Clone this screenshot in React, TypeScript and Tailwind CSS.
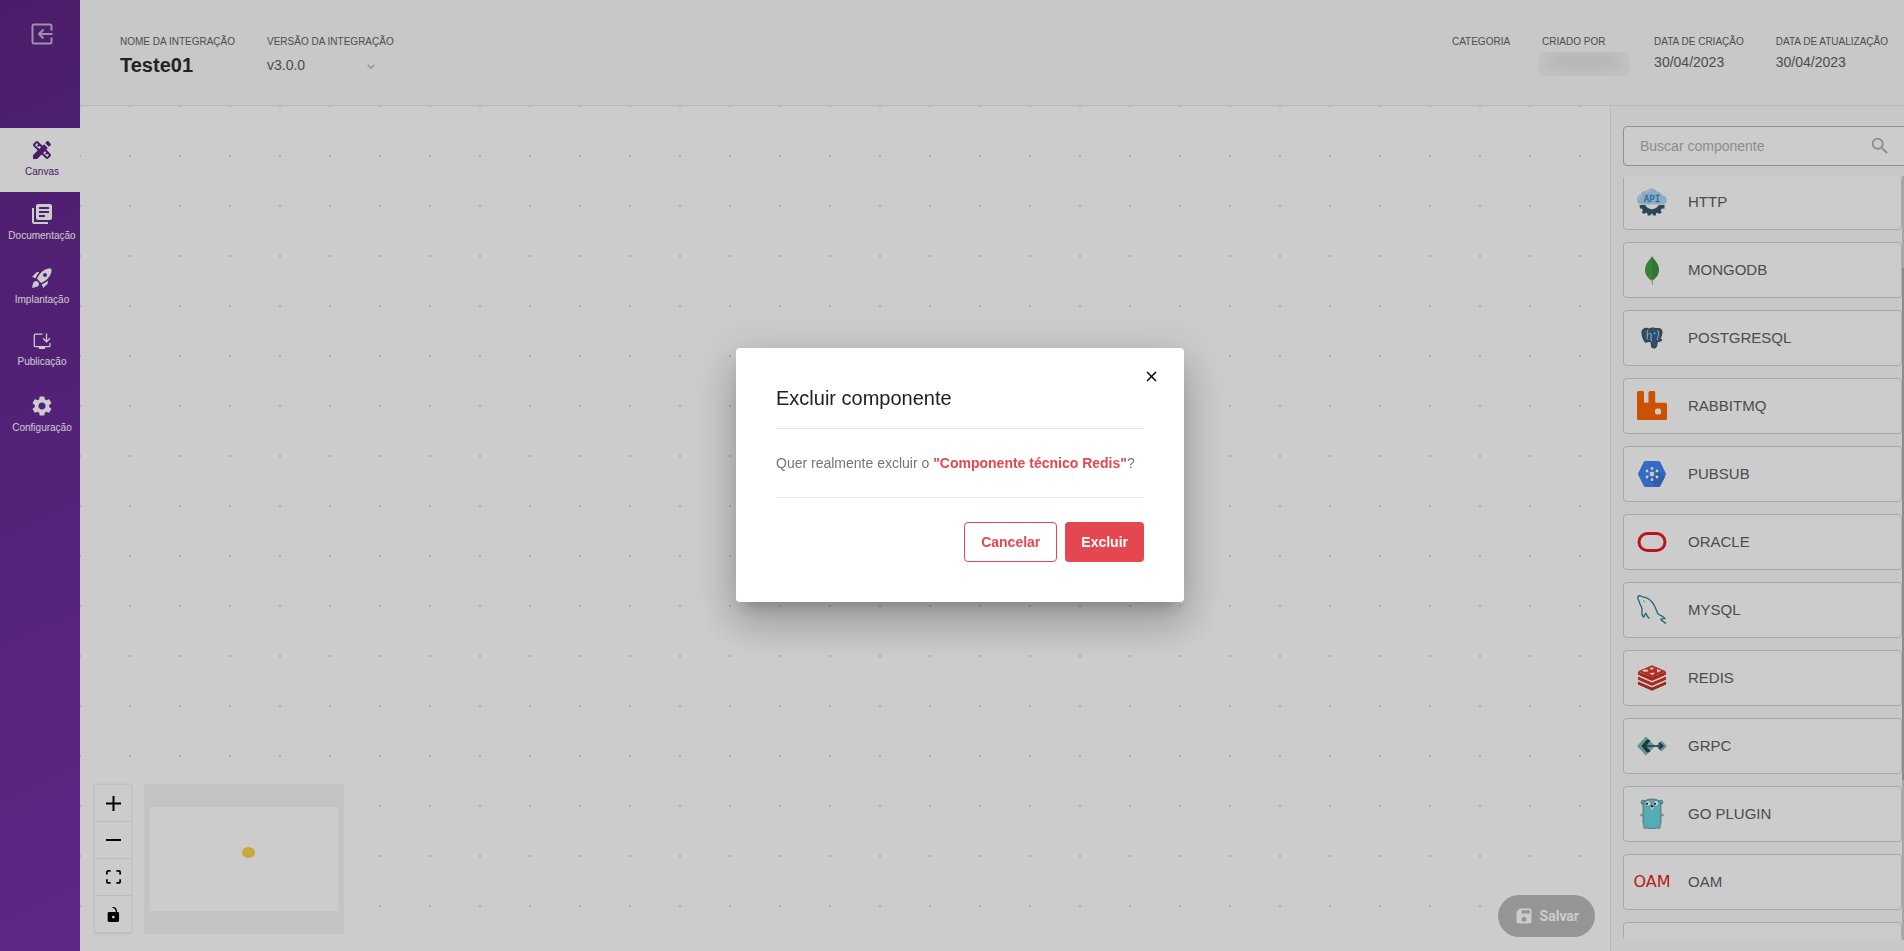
import React, { useState } from 'react';
import { MdClose, MdLibraryBooks, MdSave, MdSearch, MdSettings } from 'react-icons/md';

const ExitIcon = () => (
  <svg viewBox="0 0 24 24" className="w-6 h-6" fill="none" stroke="currentColor" strokeWidth="2">
    <path d="M21.500 8.500V4a1.500 1.500 0 0 0-1.500-1.500H4A1.500 1.500 0 0 0 2.500 4v16A1.500 1.500 0 0 0 4 21.500h16a1.500 1.500 0 0 0 1.500-1.500v-4.500" />
    <path d="M22.500 12H9M13.500 7.500 9 12l4.500 4.500" />
  </svg>
);

const DesignIcon = () => (
  <svg viewBox="0 0 24 24" className="w-6 h-6" fill="currentColor">
    <path d="M16.240 11.510l1.570-1.570-3.750-3.750-1.570 1.570-4.140-4.130c-.78-.78-2.050-.78-2.830 0l-1.900 1.900c-.78.78-.78 2.050 0 2.830l4.130 4.130L3 17.250V21h3.750l4.760-4.760 4.130 4.130c.95.95 2.230.6 2.830 0l1.900-1.900c.78-.78.78-2.050 0-2.830l-4.130-4.130zm-7.060-.44L5.040 6.940l1.890-1.900L8.200 6.310 7.020 7.500l1.410 1.410 1.190-1.190 1.450 1.450-1.890 1.900zm7.880 7.890l-4.130-4.130 1.900-1.900 1.450 1.450-1.190 1.190 1.410 1.410 1.190-1.190 1.270 1.270-1.900 1.900zM20.710 7.040c.39-.39.39-1.020 0-1.410l-2.340-2.340c-.47-.47-1.120-.29-1.410 0l-1.830 1.830 3.750 3.750 1.830-1.830z" />
    <path d="m3.500 17.500 9-9 3.500 3.500-9 9H3.500z" />
  </svg>
);

const RocketIcon = () => (
  <svg viewBox="0 0 24 24" className="w-6 h-6" fill="currentColor">
    <path d="M9.190 6.350c-2.040 2.290-3.440 5.580-3.570 5.890L2 10.690l4.050-4.050c.47-.47 1.150-.68 1.810-.55l1.330.26zM17.650 14.810c-2.290 2.040-5.580 3.440-5.890 3.570L13.310 22l4.050-4.050c.47-.47.68-1.150.55-1.810l-.26-1.330zM9 18c0 .83-.34 1.580-.88 2.120C6.940 21.300 2 22 2 22s.7-4.940 1.880-6.120A2.996 2.996 0 0 1 9 18z" />
    <path
      fillRule="evenodd"
      d="M11.170 17s3.740-1.550 5.890-3.700c5.400-5.400 4.500-9.620 4.210-10.570-.95-.3-5.170-1.190-10.570 4.210C8.550 9.090 7 12.830 7 12.830L11.170 17zM13 9a2 2 0 1 0 4 0 2 2 0 1 0-4 0z"
    />
  </svg>
);

const PublishIcon = () => (
  <svg viewBox="0 0 22 22" className="w-[22px] h-[22px]" fill="none" stroke="currentColor" strokeWidth="1.300">
    <path d="M11.500 4.200H4.500a1.200 1.200 0 0 0-1.200 1.200v10a1.200 1.200 0 0 0 1.200 1.200h13.300a1.200 1.200 0 0 0 1.200-1.200V13" />
    <path d="M15.500 3.500v8M12 8.300l3.500 3.500L19 8.300" />
    <path d="M8 18h6" strokeWidth="2" />
  </svg>
);

const HttpIcon = () => (
  <svg viewBox="0 0 32 30" className="w-8 h-[30px]">
    <path
      d="M5.500 17.500a5.300 5.300 0 0 1-.8-10.300A5.500 5.500 0 0 1 10 4 7 7 0 0 1 21.500 4.800 5.500 5.500 0 0 1 26.500 8.500a4.600 4.600 0 0 1 1 9z"
      fill="#b0d6f5"
    />
    <path d="M2.500 12.500a4 4 0 0 1 3.500-4M10.500 5.500A6 6 0 0 1 15 3" fill="none" stroke="#dcecf9" strokeWidth="1.200" />
    <path
      d="M3.500 18h5.800a7.500 7.500 0 0 0 13.400 0h5.800v3.500l-3 .3-.9 1.600 1.200 1.900-2.300 1.700-1.900-1.300-1.400.5-.4 2.300h-2.800l-.5-1.700h-1.500l-.5 1.700h-2.800l-.4-2.300-1.400-.5-1.900 1.300-2.300-1.700 1.200-1.900-.9-1.600-2-.3z"
      fill="#3c5767"
    />
    <text x="16" y="14.500" textAnchor="middle" fontSize="9" fill="#2f86c1" stroke="#2f86c1" strokeWidth=".3" fontFamily="'DejaVu Sans Mono', monospace">
      API
    </text>
  </svg>
);

const MongoIcon = () => (
  <svg viewBox="0 0 16 30" className="w-4 h-[30px]">
    <path d="M8 1C6 5 1 8 1 15c0 5 3.500 8.500 6.300 10.500h.7z" fill="#4aa047" />
    <path d="M8 1c2 4 7 7 7 14 0 5-3.500 8.500-6.300 10.500H8z" fill="#3f9143" />
    <path d="M7.400 24h1.200l.4 5.500H8z" fill="#b8a48c" />
  </svg>
);

const PostgresIcon = () => (
  <svg viewBox="0 0 22 22" className="w-[22px] h-[22px]" strokeLinejoin="round">
    <g fill="#336791" stroke="#4a4f55" strokeWidth="1.200">
      <path d="M14.500 2C17.500.8 21 2 21 5c0 2.500-1.200 5.500-2.500 7.500.8.2 1.700.2 2.200.3-.8 1.500-2.700 1.900-4.200 1.500z" />
      <path d="M7 1.500C4 .8 1 2 1 5.500c0 3 1.700 8 3.500 9.500 1 .6 2-.4 3-1.500z" />
      <path d="M11.500 1.200c4-.4 6.500 3 6 6.300-.2 2-1.200 3.500-1.200 5.500 0 1.500-.2 3.500-.6 5.500-.4 1.500-1.200 2.300-2.500 2.500-1.500.1-2.500-.7-2.700-2-.2-1.500 0-3.500-.3-4.500-1.500.3-3.400-.2-3.700-1.700C6.300 10.500 7 9 6.500 6.500c-.2-3 1.500-5 5-5.300z" />
    </g>
    <g fill="none" stroke="#fff" strokeWidth=".8">
      <path d="M7 3C5.800 4.500 6.300 6.500 6.400 8c.1 1.700-.5 3 .3 4.500M16.500 3.300c1.200 1.500 1.400 4 .6 6-.5 1.500-1 2.500-.7 4" />
      <path d="M7.500 7c1-.7 2.200-.6 2.700.3.4 1.500-.4 2.700-.3 4 .1 1.200.7 1.700.5 3M12.500 6.500c.8-.6 1.800-.5 2.300-.1" />
    </g>
  </svg>
);

const RabbitIcon = () => (
  <svg viewBox="0 0 30 30" className="w-[30px] h-[30px]">
    <path
      fillRule="evenodd"
      d="M1.500 0h4A1.500 1.500 0 0 1 7 1.500v9.300a1 1 0 0 0 1 1h2.500a1 1 0 0 0 1-1V1.500A1.500 1.500 0 0 1 13 0h3.700a1.500 1.500 0 0 1 1.500 1.500v9.300a1 1 0 0 0 1 1h9.300a1.500 1.500 0 0 1 1.500 1.500v14.200a1.500 1.500 0 0 1-1.500 1.500h-27A1.500 1.500 0 0 1 0 27.500v-26A1.500 1.500 0 0 1 1.500 0zM20 17.500a2 2 0 0 0-2 2v2a2 2 0 0 0 2 2h2a2 2 0 0 0 2-2v-2a2 2 0 0 0-2-2z"
      fill="#ff6600"
    />
  </svg>
);

const PubSubIcon = () => (
  <svg viewBox="0 0 30 28" className="w-[30px] h-7">
    <path d="M8.500 1h13a2 2 0 0 1 1.700 1l5.500 11a2 2 0 0 1 0 2l-5.500 11a2 2 0 0 1-1.700 1h-13a2 2 0 0 1-1.700-1L1.300 15a2 2 0 0 1 0-2L6.800 2a2 2 0 0 1 1.700-1z" fill="#4285f4" />
    <path d="m20 10 8 7-4.800 9a2 2 0 0 1-1.700 1H19l-8-9z" fill="#3b76d9" />
    <g fill="#fff">
      <circle cx="15" cy="14" r="2.200" />
      <circle cx="15" cy="8.300" r="1.400" />
      <circle cx="15" cy="19.700" r="1.400" />
      <circle cx="10" cy="11" r="1.400" />
      <circle cx="20" cy="11" r="1.400" />
      <circle cx="10" cy="17" r="1.400" />
      <circle cx="20" cy="17" r="1.400" />
    </g>
    <path d="M15 8.300v11.400M10 11l10 6M20 11l-10 6" stroke="#fff" strokeWidth=".5" opacity=".6" />
  </svg>
);

const OracleIcon = () => (
  <svg viewBox="0 0 30 20" className="w-[30px] h-5">
    <rect x="2" y="1.500" width="26" height="17" rx="8.500" fill="none" stroke="#ea1b22" strokeWidth="3" />
  </svg>
);

const MysqlIcon = () => (
  <svg viewBox="0 0 30 30" className="w-[30px] h-[30px]" fill="none" stroke="#2e8299" strokeWidth="1.300" strokeLinejoin="round">
    <path d="M12.500 23.500c-1.800-1.500-3-3.400-3.600-5.300-1 1-1.700 2.200-2 4-1.800-1-2.300-4.500-1.800-8.200C4.500 11.500 3 9.500 2.300 7 1.700 5 .2 3 .8 1.700 1.800.3 4 .6 5.500 1.800c5.500.2 9.500 4.200 12 9 1.500 2.800 2 5.600 3.500 8.200 1.800 1.300 4.500 1.800 7 4.500-1.500.2-3.200.2-4.200.8 1 1.700 3.200 2.500 5.200 4.200" />
    <path d="M6.500 5.500c.5.500 1 1 1.200 1.800" strokeWidth="1" />
  </svg>
);

const RedisIcon = () => (
  <svg viewBox="0 0 30 26" className="w-[30px] h-[26px]">
    <path d="m1 16.500 14 6 14-6v3L15 25.700 1 19.500z" fill="#c42e22" />
    <path d="m1 11.500 14 6 14-6v3.200l-14 6.200-14-6.200z" fill="#d83427" />
    <path d="m1 6.500 14 6 14-6v3.200l-14 6.200L1 9.700z" fill="#d03024" />
    <path d="m1 6.300 14-6 14 6-14 6.400z" fill="#dd3a2b" />
    <path d="m1 10.500 14 6.100 14-6.100M1 15.500l14 6.100 14-6.100" fill="none" stroke="#fff" strokeWidth="1" />
    <g fill="#fff">
      <path d="m13.500 2.300 1.500.4 1.700-.5-.5 1.200 1.500.6-2.300.2-.8 1-.8-1-2-.2 1.700-.6z" />
      <ellipse cx="8.500" cy="5.700" rx="3" ry="1.100" />
      <path d="m20 4 4.500 1.800L20 7.500zM12 8.300l6-.8-2.200 2.700z" />
    </g>
  </svg>
);

const GrpcIcon = () => (
  <svg viewBox="0 0 32 20" className="w-8 h-5">
    <path d="m1 10 9-9.500L19 10l-9 9.500zM20 10l5.500-5.500L31 10l-5.500 5.500z" fill="#7dbab5" />
    <path d="M8 10h19" stroke="#2b5160" strokeWidth="1.600" />
    <path d="m14 4.500-3-.5-5 6 5 6 3-.5L9.500 10z" fill="#244653" stroke="#244653" />
    <path d="m23 7 3.500 3L23 13" fill="none" stroke="#244653" strokeWidth="2" />
  </svg>
);

const GopherIcon = () => (
  <svg viewBox="0 0 24 32" className="w-6 h-8">
    <g fill="#f3d7b5" stroke="#8a7a66" strokeWidth=".5">
      <ellipse cx="1.800" cy="17" rx="1.500" ry="1" />
      <ellipse cx="22.200" cy="17" rx="1.500" ry="1" />
      <ellipse cx="5" cy="29.500" rx="1.800" ry="1.300" />
      <ellipse cx="19" cy="29.500" rx="1.800" ry="1.300" />
    </g>
    <circle cx="3.200" cy="4.200" r="2" fill="#6bd7e3" stroke="#37646b" strokeWidth=".7" />
    <circle cx="20.800" cy="4.200" r="2" fill="#6bd7e3" stroke="#37646b" strokeWidth=".7" />
    <path d="M12 1c6 0 9 2.500 9 7v16c0 5-3 6.500-9 6.500S3 29 3 24V8c0-4.500 3-7 9-7z" fill="#6bd7e3" stroke="#37646b" strokeWidth=".6" />
    <circle cx="8" cy="5.500" r="2.800" fill="#fff" stroke="#37646b" strokeWidth=".4" />
    <circle cx="16" cy="5.500" r="2.800" fill="#fff" stroke="#37646b" strokeWidth=".4" />
    <circle cx="7" cy="5.800" r="1" fill="#111" />
    <circle cx="15" cy="5.800" r="1" fill="#111" />
    <ellipse cx="12" cy="9.500" rx="1.900" ry="1.200" fill="#f3d7b5" />
    <ellipse cx="12" cy="8.200" rx="1.300" ry=".9" fill="#222" />
    <path d="M11.200 10.300h1.600v1.500h-1.600z" fill="#fff" />
  </svg>
);

const OamLogo = () => (
  <span className="font-['DejaVu_Sans'] text-base text-[#ea1f27]" aria-hidden="true">OAM</span>
);

const menuItems = [
  { label: 'Canvas', icon: <DesignIcon /> },
  { label: 'Documentação', icon: <MdLibraryBooks className="w-6 h-6" /> },
  { label: 'Implantação', icon: <RocketIcon /> },
  { label: 'Publicação', icon: <PublishIcon /> },
  { label: 'Configuração', icon: <MdSettings className="w-6 h-6" /> },
];

const components = [
  { name: 'HTTP', icon: <HttpIcon /> },
  { name: 'MONGODB', icon: <MongoIcon /> },
  { name: 'POSTGRESQL', icon: <PostgresIcon /> },
  { name: 'RABBITMQ', icon: <RabbitIcon /> },
  { name: 'PUBSUB', icon: <PubSubIcon /> },
  { name: 'ORACLE', icon: <OracleIcon /> },
  { name: 'MYSQL', icon: <MysqlIcon /> },
  { name: 'REDIS', icon: <RedisIcon /> },
  { name: 'GRPC', icon: <GrpcIcon /> },
  { name: 'GO PLUGIN', icon: <GopherIcon /> },
  { name: 'OAM', icon: <OamLogo /> },
  { name: '', icon: null },
];

const controls = [
  {
    label: 'Aumentar zoom',
    viewBox: '0 0 32 32',
    path: 'M32 18.133H18.133V32h-4.266V18.133H0v-4.266h13.867V0h4.266v13.867H32z',
  },
  { label: 'Diminuir zoom', viewBox: '0 0 32 5', path: 'M0 0h32v4.200H0z' },
  {
    label: 'Ajustar à tela',
    viewBox: '0 0 32 30',
    path: 'M3.692 4.630c0-.53.4-.938.939-.938h5.215V0H4.708C2.130 0 0 2.054 0 4.630v5.216h3.692V4.631zM27.354 0h-5.200v3.692h5.170c.53 0 .984.4.984.939v5.215H32V4.631A4.624 4.624 0 0027.354 0zm.954 24.830c0 .532-.4.940-.939.940h-5.215v3.768h5.215c2.577 0 4.631-2.130 4.631-4.707v-5.139h-3.692v5.139zm-23.677.940c-.531 0-.939-.4-.939-.940v-5.138H0v5.139c0 2.577 2.130 4.707 4.708 4.707h5.138V25.770H4.631z',
  },
  {
    label: 'Travar',
    viewBox: '0 0 25 32',
    path: 'M21.333 10.667H19.810V7.619C19.810 3.429 16.380 0 12.190 0c-4.114 1.828-1.370 2.133.305 2.438 1.676.305 4.420 2.590 4.420 5.181v3.048H3.047A3.056 3.056 0 000 13.714v15.238A3.056 3.056 0 003.048 32h18.285a3.056 3.056 0 003.048-3.048V13.714a3.056 3.056 0 00-3.048-3.047zM12.190 24.533a3.056 3.056 0 01-3.047-3.047 3.056 3.056 0 013.047-3.048 3.056 3.056 0 013.048 3.048 3.056 3.056 0 01-3.048 3.047z',
  },
];

const Sidebar = () => (
  <nav className="w-20 shrink-0 flex flex-col bg-[linear-gradient(155deg,#5d2586,#7631a9)] text-white">
    <button className="h-32 pl-1 pt-[22px] flex justify-center items-start text-white/65" aria-label="Sair">
      <ExitIcon />
    </button>
    {menuItems.map((item, index) => (
      <a
        key={item.label}
        href="#"
        className={`h-16 pl-1 pt-2.5 flex flex-col items-center gap-1 text-[10px] leading-3 ${
          index === 0 ? 'bg-white text-[#5c2483]' : ''
        }`}
      >
        {item.icon}
        {item.label}
      </a>
    ))}
  </nav>
);

const Header = () => (
  <header className="shrink-0 h-[106px] bg-[#fafafa] border-b border-[#e6e6e6] flex justify-between pl-10 pr-4 pt-[34px] text-[#616161]">
    <div className="flex gap-8">
      <div className="flex flex-col gap-1">
        <span className="text-[10px] leading-[15px]">NOME DA INTEGRAÇÃO</span>
        <h1 className="text-xl leading-6 font-bold text-[#2b2b2b]">Teste01</h1>
      </div>
      <div className="flex flex-col gap-1">
        <label htmlFor="version" className="text-[10px] leading-[15px]">VERSÃO DA INTEGRAÇÃO</label>
        <div className="relative">
          <select id="version" className="appearance-none w-full h-6 text-sm bg-transparent outline-none">
            <option>v3.0.0</option>
          </select>
          <svg viewBox="0 0 10 6" className="absolute right-[19px] top-[11px] w-2 h-[5px] pointer-events-none" fill="none" stroke="#bdbdbd" strokeWidth="2">
            <path d="m1 1 4 4 4-4" />
          </svg>
        </div>
      </div>
    </div>
    <div className="flex gap-8">
      <div className="text-[10px] leading-[15px]">CATEGORIA</div>
      <div className="w-20">
        <div className="text-[10px] leading-[15px]">CRIADO POR</div>
        <div className="-ml-1 -mr-2 mt-[3px] h-6 overflow-hidden bg-[#f6f6f6] px-2 py-1">
          <div className="h-3 bg-[#dadada] blur-sm"></div>
        </div>
      </div>
      <div className="flex flex-col gap-1">
        <span className="text-[10px] leading-[15px]">DATA DE CRIAÇÃO</span>
        <span className="text-sm leading-[18px]">30/04/2023</span>
      </div>
      <div className="flex flex-col gap-1">
        <span className="text-[10px] leading-[15px]">DATA DE ATUALIZAÇÃO</span>
        <span className="text-sm leading-[18px]">30/04/2023</span>
      </div>
    </div>
  </header>
);

const Canvas = () => (
  <main className="relative flex-1 bg-white">
    <svg className="absolute inset-0 w-full h-full">
      <pattern id="dots" x="-25" y="-25" width="50" height="50" patternUnits="userSpaceOnUse">
        <circle cx="25" cy="25" r="1" fill="#cecece" />
      </pattern>
      <rect width="100%" height="100%" fill="url(#dots)" />
    </svg>

    <div className="absolute left-[15px] bottom-[17px] flex items-center gap-[13px]">
      <div className="flex flex-col bg-white shadow-[0_0_2px_1px_rgba(0,0,0,0.08)]">
        {controls.map((control) => (
          <button
            key={control.label}
            aria-label={control.label}
            className="w-9 h-[37px] flex items-center justify-center border-b border-[#eeeeee]"
          >
            <svg viewBox={control.viewBox} className="w-[15px] max-h-[15px]">
              <path d={control.path} />
            </svg>
          </button>
        ))}
      </div>
      <svg viewBox="0 0 200 150" className="w-[200px] h-[150px]">
        <rect width="200" height="150" fill="#f6f6f6" />
        <rect x="6" y="23" width="188" height="104" fill="#fff" />
        <ellipse cx="104.500" cy="68.500" rx="6.500" ry="5.500" fill="#fcd34b" />
      </svg>
    </div>

    <button className="absolute right-[15px] bottom-3.5 h-[42px] px-4 rounded-full bg-[#bbbbbb] text-white font-['Roboto'] text-sm font-bold flex items-center gap-1.5">
      <MdSave className="w-5 h-5 -scale-x-100" />
      Salvar
    </button>
  </main>
);

const ComponentsPanel = () => {
  const [search, setSearch] = useState('');
  const visible = components.filter((c) => c.name.toLowerCase().includes(search.toLowerCase()));

  return (
    <aside className="w-[294px] shrink-0 min-h-0 flex flex-col gap-2.5 bg-[#fafafa] border-l border-[#e6e6e6] pl-3 pt-5 pb-[11px]">
      <div className="shrink-0 h-10 -mr-1 flex items-center bg-white border border-[#b5b5b5] rounded px-4">
        <input
          aria-label="Buscar componente"
          placeholder="Buscar componente"
          value={search}
          onChange={(e) => setSearch(e.target.value)}
          className="flex-1 min-w-0 text-sm text-[#616161] placeholder:text-[#b0b0b0] outline-none"
        />
        <MdSearch className="w-[22px] h-[22px] text-[#b0b0b0]" />
      </div>
      <div className="flex-1 min-h-0 flex">
        <ul className="flex-1 flex flex-col gap-3 overflow-hidden rounded">
          {visible.map((c, index) => (
            <li
              key={c.name}
              className={`shrink-0 h-14 pl-2 flex items-center gap-4 bg-white border border-slate-300 rounded text-[15px] text-[#616161] ${
                index === 0 ? '-mt-0.5' : ''
              }`}
            >
              <span className="w-10 flex justify-center">{c.icon}</span>
              {c.name}
            </li>
          ))}
        </ul>
        {/* Scroll rail */}
        <div className="w-0.5 bg-[#d0d0d0]">
          <div className="h-[12%]"></div>
          <div className="h-[67%] bg-[#b0b0b0]"></div>
        </div>
      </div>
    </aside>
  );
};

interface DeleteDialogProps {
  name: string;
  onClose: () => void;
}

const DeleteDialog = ({ name, onClose }: DeleteDialogProps) => (
  <div className="fixed inset-0 bg-black/20 flex items-center justify-center pl-4 pb-px">
    <div
      role="dialog"
      aria-labelledby="dialog-title"
      className="relative w-[448px] max-w-full bg-white rounded p-10 shadow-[0_11px_15px_-7px_rgba(0,0,0,0.2),0_24px_38px_3px_rgba(0,0,0,0.14),0_9px_46px_8px_rgba(0,0,0,0.12)]"
    >
      <button onClick={onClose} aria-label="Fechar" className="absolute right-6 top-5">
        <MdClose className="w-[17px] h-[17px] text-black" />
      </button>
      <h2 id="dialog-title" className="text-xl leading-5 text-[#212121] pb-5 border-b border-[#e6e6e6]">
        Excluir componente
      </h2>
      <p className="text-sm leading-5 py-6 text-[#757575] border-b border-[#e6e6e6]">
        Quer realmente excluir o <strong className="text-[#e4474f]">"{name}"</strong>?
      </p>
      <div className="flex justify-end gap-2 mt-6 text-sm font-bold">
        <button onClick={onClose} className="h-10 px-4 rounded border border-[#e4474f] text-[#e4474f]">Cancelar</button>
        <button onClick={onClose} className="h-10 px-4 rounded bg-[#e4474f] text-white">Excluir</button>
      </div>
    </div>
  </div>
);

function App() {
  const [showDialog, setShowDialog] = useState(true);

  return (
    <div className="h-screen flex overflow-hidden font-['Liberation_Sans',Arial,sans-serif]">
      <Sidebar />
      <div className="flex-1 min-w-0 flex flex-col">
        <Header />
        <div className="flex-1 min-h-0 flex">
          <Canvas />
          <ComponentsPanel />
        </div>
      </div>
      {showDialog && <DeleteDialog name="Componente técnico Redis" onClose={() => setShowDialog(false)} />}
    </div>
  );
}

export default App;
